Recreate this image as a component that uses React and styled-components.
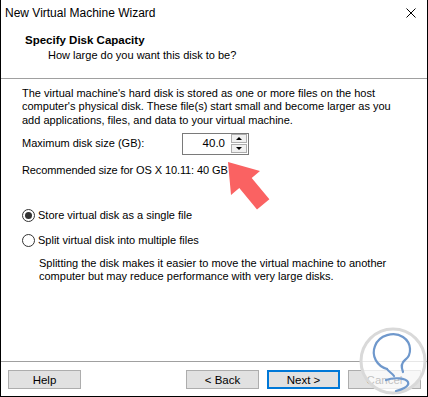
import styled, { createGlobalStyle } from "styled-components";

const GlobalStyle = createGlobalStyle`
  html, body {
    margin: 0;
    padding: 0;
    background: #fff;
  }
  body {
    font-family: "Liberation Sans", Arial, sans-serif;
    font-size: 11px;
    color: #000;
  }
`

const Window = styled.div`
  position: relative;
  width: 428px;
  height: 397px;
  box-sizing: border-box;
  border: 1px solid #000;
  border-top: none;
  background: #fff;
  display: flex;
  flex-direction: column;
  overflow: hidden;
`

const TitleBar = styled.div`
  height: 26px;
  display: flex;
  align-items: center;
  justify-content: space-between;
  padding: 0 11px 0 4px;
  font-size: 12px;
  line-height: 26px;
`

const Header = styled.div`
  height: 53px;
  box-sizing: border-box;
  padding-top: 7px;
  border-bottom: 1px solid #a0a0a0;
`

const Heading = styled.div`
  padding-left: 24px;
  font-size: 11.5px;
  font-weight: bold;
  line-height: 15px;
`

const SubHeading = styled.div`
  padding-left: 47px;
  line-height: 15px;
`

const Body = styled.div`
  flex: 1;
  padding: 8px 20px 0 21px;
  line-height: 13.3px;
`

const Para = styled.p`
  margin: ${p => p.$top || 0}px 0 0 ${p => p.$indent || 0}px;
  letter-spacing: ${p => p.$tight ? "-0.1px" : "normal"};
`

const SizeRow = styled.div`
  display: flex;
  align-items: center;
  margin-top: 6px;
`

const SizeLabel = styled.span`
  width: 160px;
`

const SpinBox = styled.div`
  width: 67px;
  height: 22px;
  box-sizing: border-box;
  border: 1px solid #7a7a7a;
  display: flex;
  align-items: center;
  padding: 0 1px 0 0;
`

const SpinValue = styled.span`
  flex: 1;
  text-align: right;
  padding-right: 6px;
  font-size: 11.5px;
`

const SpinButtons = styled.div`
  display: flex;
  flex-direction: column;
  gap: 1px;
`

const SpinButton = styled.div`
  width: 16px;
  height: 9px;
  box-sizing: border-box;
  border: 1px solid #adadad;
  background: #f0f0f0;
  display: flex;
  align-items: center;
  justify-content: center;
  &::after {
    content: "";
    border-left: 3px solid transparent;
    border-right: 3px solid transparent;
    ${p => p.$down ? "border-top: 3px solid #000;" : "border-bottom: 3px solid #000;"}
  }
`

const RadioRow = styled.label`
  display: flex;
  align-items: center;
  gap: 3px;
  height: 16px;
  margin-top: ${p => p.$top}px;
`

const RadioCircle = styled.span`
  width: 13px;
  height: 13px;
  box-sizing: border-box;
  border: 1px solid #333;
  border-radius: 50%;
  display: flex;
  align-items: center;
  justify-content: center;
  &::after {
    content: "";
    width: 7px;
    height: 7px;
    border-radius: 50%;
    background: ${p => p.$checked ? "#333" : "transparent"};
  }
`

const Footer = styled.div`
  height: 35px;
  box-sizing: border-box;
  border-top: 1px solid #a0a0a0;
  padding: 8px 6px 0 7px;
  display: flex;
  align-items: flex-start;
  gap: 8px;
`

const Button = styled.div`
  width: 73px;
  height: 19px;
  box-sizing: border-box;
  border: ${p => p.$primary ? "2px solid #0078d7" : "1px solid #adadad"};
  background: #e1e1e1;
  display: flex;
  align-items: center;
  justify-content: center;
  font-size: 11.5px;
  margin-left: ${p => p.$push ? "auto" : "0"};
`

const Arrow = styled.svg`
  position: absolute;
  left: 219px;
  top: 156px;
  pointer-events: none;
`

const Watermark = styled.svg`
  position: absolute;
  left: 355px;
  top: 322px;
  pointer-events: none;
`

function CloseIcon() {
  return (
    <svg width="10" height="10" viewBox="0 0 10 10">
      <path d="M0.5 0.5 L9.5 9.5 M9.5 0.5 L0.5 9.5" stroke="#000" strokeWidth="1" />
    </svg>
  )
}

function App() {
  return (
    <>
      <GlobalStyle />
      <Window>
        <TitleBar>
          <span>New Virtual Machine Wizard</span>
          <CloseIcon />
        </TitleBar>
        <Header>
          <Heading>Specify Disk Capacity</Heading>
          <SubHeading>How large do you want this disk to be?</SubHeading>
        </Header>
        <Body>
          <Para>
            The virtual machine's hard disk is stored as one or more files on the host
            computer's physical disk. These file(s) start small and become larger as you
            add applications, files, and data to your virtual machine.
          </Para>
          <SizeRow>
            <SizeLabel>Maximum disk size (GB):</SizeLabel>
            <SpinBox>
              <SpinValue>40.0</SpinValue>
              <SpinButtons>
                <SpinButton />
                <SpinButton $down />
              </SpinButtons>
            </SpinBox>
          </SizeRow>
          <Para $top={9} $tight>Recommended size for OS X 10.11: 40 GB</Para>
          <RadioRow $top={30}>
            <RadioCircle $checked />
            <span>Store virtual disk as a single file</span>
          </RadioRow>
          <RadioRow $top={9}>
            <RadioCircle />
            <span>Split virtual disk into multiple files</span>
          </RadioRow>
          <Para $top={9} $indent={17}>
            Splitting the disk makes it easier to move the virtual machine to another
            computer but may reduce performance with very large disks.
          </Para>
        </Body>
        <Footer>
          <Button>Help</Button>
          <Button $push>&lt; Back</Button>
          <Button $primary>Next &gt;</Button>
          <Button>Cancel</Button>
        </Footer>

        <Arrow width="65" height="60" viewBox="0 0 65 60">
          <polygon
            points="8,6 40,15 31.7,21.9 49.4,43.3 37,53.5 19.3,32.1 11,39"
            fill="#fa6262"
          />
        </Arrow>

        <Watermark width="73" height="75" viewBox="0 0 73 75">
          <circle cx="37" cy="39" r="32" fill="rgba(255,255,255,0.75)" stroke="#d9d9d9" strokeWidth="3" />
          <path
            d="M31 47 C21 44 15 34 19 24 C23 13 38 9 47 15 C56 21 56 33 49 38 C45 41 45 45 47 50"
            fill="none" stroke="#6f98cc" strokeWidth="2.2" strokeLinecap="round"
          />
          <path
            d="M31 47 C33 50 36 51 38 54 M30 58 C38 55 50 56 52 60 C54 65 44 68 40 69"
            fill="none" stroke="#6f98cc" strokeWidth="2.2" strokeLinecap="round"
          />
        </Watermark>
      </Window>
    </>
  )
}

export default App;
